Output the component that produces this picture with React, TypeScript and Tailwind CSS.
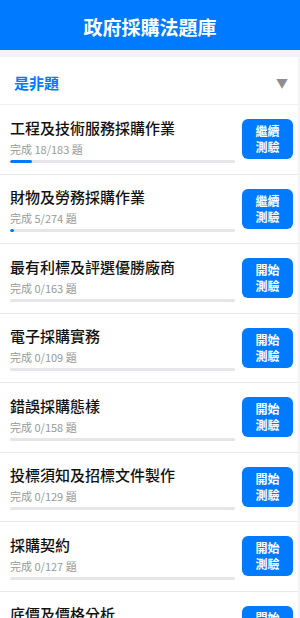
import React from "react";

const items = [
  { title: "工程及技術服務採購作業", done: 18, total: 183 },
  { title: "財物及勞務採購作業", done: 5, total: 274 },
  { title: "最有利標及評選優勝廠商", done: 0, total: 163 },
  { title: "電子採購實務", done: 0, total: 109 },
  { title: "錯誤採購態樣", done: 0, total: 158 },
  { title: "投標須知及招標文件製作", done: 0, total: 129 },
  { title: "採購契約", done: 0, total: 127 },
  { title: "底價及價格分析", done: 0, total: 98 },
];

export default function App() {
  return (
    <div
      className="w-[300px] h-[618px] overflow-hidden bg-[#f2f2f7]"
      style={{ fontFamily: '"Noto Sans CJK TC", "Noto Sans", sans-serif' }}
    >
      <div className="h-[50px] bg-[#007aff] flex items-center justify-center pt-[3px]">
        <span className="text-white text-[19px] leading-[26px] font-bold">政府採購法題庫</span>
      </div>
      <div className="mt-[7px] w-[298px]">
        <div className="h-[48px] bg-white flex items-center justify-between pl-[14px] pr-[10px] pt-[4px] border-b border-[#f0f0f3]">
          <span className="text-[#007aff] text-[15px] leading-[22px] font-bold">是非題</span>
          <span className="text-[#8e8e8e] text-[12px] leading-[16px]">▼</span>
        </div>
        {items.map((it, i) => (
          <div
            key={i}
            className="h-[69.5px] bg-white flex items-center pl-[10px] pr-[5px] border-b border-[#e8e8ed]"
          >
            <div className="flex-1 flex flex-col">
              <div className="text-[15px] leading-[24px] font-medium text-[#111]">{it.title}</div>
              <div className="text-[11px] leading-[18px] text-[#999]">
                完成 {it.done}/{it.total} 題
              </div>
              <div className="mt-[2px] h-[3px] rounded-full bg-[#e5e5ea] overflow-hidden">
                <div
                  className="h-full bg-[#007aff] rounded-full"
                  style={{ width: `${(it.done / it.total) * 100}%` }}
                />
              </div>
            </div>
            <div className="ml-[7px] w-[51px] h-[40px] rounded-[6px] bg-[#007aff] flex flex-col items-center justify-center text-white text-[12px] font-bold leading-[16px]">
              <span>{it.done > 0 ? "繼續" : "開始"}</span>
              <span>測驗</span>
            </div>
          </div>
        ))}
      </div>
    </div>
  );
}
